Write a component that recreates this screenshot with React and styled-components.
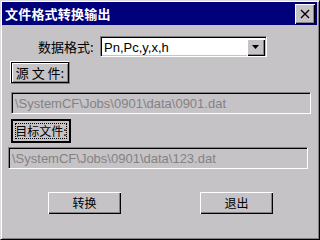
import React from "react";
import styled, { createGlobalStyle } from "styled-components";

const GRAY = "#c6c3c6";
const DARK = "#848284";

const Global = createGlobalStyle`
  html, body { margin: 0; padding: 0; background: ${GRAY}; }
  body { font-family: "Liberation Sans", "Noto Sans CJK SC", sans-serif; }
  * { box-sizing: border-box; }
`;

const Window = styled.div`
  width: 320px;
  height: 240px;
  background: ${GRAY};
  border: 1px solid;
  border-color: #dedbde #000 #000 #dedbde;
  box-shadow: inset 1px 1px #fff, inset -1px -1px ${DARK};
  padding: 1px;
  display: flex;
  flex-direction: column;
  overflow: hidden;
`;

const TitleBar = styled.div`
  height: 23px;
  margin-right: 1px;
  background: #00007b;
  display: flex;
  align-items: center;
  justify-content: space-between;
  padding: 0 2px 0 3px;
`;

const Title = styled.span`
  color: #fff;
  font-family: "Noto Sans CJK SC", sans-serif;
  font-weight: 700;
  font-size: 13px;
  letter-spacing: 0.2px;
  line-height: 1;
`;

const CloseButton = styled.div`
  width: 20px;
  height: 20px;
  background: ${GRAY};
  box-shadow: inset 1px 1px #fff, inset -1px -1px #000, inset -2px -2px ${DARK};
  display: flex;
  align-items: center;
  justify-content: center;
`;

const Body = styled.div`
  display: flex;
  flex-direction: column;
  align-items: flex-start;
`;

const FormatRow = styled.div`
  margin-top: 11px;
  margin-left: 36px;
  display: flex;
  align-items: center;
`;

const Label = styled.span`
  width: 62px;
  font-family: "Noto Sans CJK SC", sans-serif;
  font-size: 13px;
  color: #000;
`;

const Combo = styled.div`
  width: 167px;
  height: 21px;
  background: #fff;
  border: 1px solid;
  border-color: ${DARK} #fff #fff ${DARK};
  box-shadow: inset 1px 1px #000, inset -1px -1px ${GRAY};
  padding: 2px 1px 1px 2px;
  display: flex;
  align-items: center;
`;

const ComboText = styled.span`
  flex: 1;
  padding-left: 1px;
  font-size: 13px;
  color: #000;
  line-height: 1;
`;

const DropButton = styled.div`
  width: 18px;
  height: 17px;
  background: ${GRAY};
  box-shadow: inset 1px 1px #fff, inset -1px -1px #000, inset -2px -2px ${DARK};
  display: flex;
  align-items: center;
  justify-content: center;
`;

const PushButton = styled.div`
  margin-top: ${(p) => p.$top}px;
  margin-left: ${(p) => p.$left}px;
  width: ${(p) => p.$w}px;
  height: ${(p) => p.$h}px;
  background: ${GRAY};
  display: flex;
  align-items: center;
  justify-content: center;
  font-family: "Noto Sans CJK SC", sans-serif;
  font-size: ${(p) => p.$fs || 12}px;
  color: #000;
  line-height: 1;
  white-space: pre;
  ${(p) =>
    p.$variant === "framed" &&
    `
    border: 1px solid;
    border-color: #fff ${DARK} ${DARK} #fff;
    box-shadow: inset 0 0 0 1px #000, inset 2px 2px #fff, inset -2px -2px ${DARK};
  `}
  ${(p) =>
    p.$variant === "focused" &&
    `
    border: 2px solid #000;
    padding: 2px;
  `}
  ${(p) =>
    p.$variant === "plain" &&
    `
    box-shadow: inset 1px 1px #fff, inset -1px -1px #000, inset -2px -2px ${DARK};
  `}
`;

const FocusRect = styled.span`
  width: 100%;
  height: 100%;
  border: 1px dotted #000;
  display: flex;
  align-items: center;
  justify-content: center;
`;

const PathField = styled.div`
  margin-top: ${(p) => p.$top}px;
  margin-left: ${(p) => p.$left}px;
  width: 300px;
  height: 22px;
  border: 1px solid;
  border-color: ${DARK} #fff #fff ${DARK};
  box-shadow: inset 1px 1px #000;
  padding: 0 0 0 3px;
  display: flex;
  align-items: center;
  font-size: 13px;
  color: ${DARK};
  line-height: 1;
  white-space: nowrap;
`;

const ButtonRow = styled.div`
  margin-top: 23px;
  margin-left: 46px;
  display: flex;
  gap: 79px;
`;

const Arrow = () => (
  <svg width="8" height="5" viewBox="0 0 8 5">
    <polygon points="0,0 7,0 3.5,4" fill="#000" />
  </svg>
);

const CloseX = () => (
  <svg width="10" height="10" viewBox="0 0 10 10">
    <path d="M1 1 L9 9 M9 1 L1 9" stroke="#000" strokeWidth="1.4" />
  </svg>
);

export default function App() {
  return (
    <>
      <Global />
      <Window>
        <TitleBar>
          <Title>文件格式转换输出</Title>
          <CloseButton>
            <CloseX />
          </CloseButton>
        </TitleBar>
        <Body>
          <FormatRow>
            <Label>数据格式:</Label>
            <Combo>
              <ComboText>Pn,Pc,y,x,h</ComboText>
              <DropButton>
                <Arrow />
              </DropButton>
            </Combo>
          </FormatRow>
          <PushButton $variant="framed" $top={4} $left={8} $w={60} $h={23} $fs={13}>
            {"源 文 件:"}
          </PushButton>
          <PathField $top={8} $left={9}>
            \SystemCF\Jobs\0901\data\0901.dat
          </PathField>
          <PushButton $variant="focused" $top={5} $left={9} $w={60} $h={24} $fs={12}>
            <FocusRect>目标文件:</FocusRect>
          </PushButton>
          <PathField $top={4} $left={6}>
            \SystemCF\Jobs\0901\data\123.dat
          </PathField>
          <ButtonRow>
            <PushButton $variant="plain" $top={0} $left={0} $w={73} $h={22}>
              转换
            </PushButton>
            <PushButton $variant="plain" $top={0} $left={0} $w={73} $h={22}>
              退出
            </PushButton>
          </ButtonRow>
        </Body>
      </Window>
    </>
  );
}
